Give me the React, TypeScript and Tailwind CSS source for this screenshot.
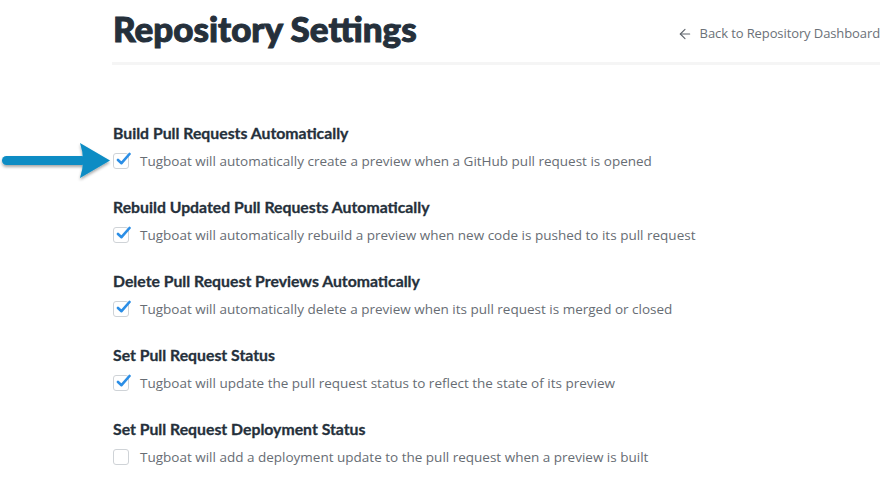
import { ArrowLeft } from 'lucide-react';

type Setting = {
  title: string;
  description: string;
  checked: boolean;
};

const settings: Setting[] = [
  {
    title: 'Build Pull Requests Automatically',
    description: 'Tugboat will automatically create a preview when a GitHub pull request is opened',
    checked: true,
  },
  {
    title: 'Rebuild Updated Pull Requests Automatically',
    description: 'Tugboat will automatically rebuild a preview when new code is pushed to its pull request',
    checked: true,
  },
  {
    title: 'Delete Pull Request Previews Automatically',
    description: 'Tugboat will automatically delete a preview when its pull request is merged or closed',
    checked: true,
  },
  {
    title: 'Set Pull Request Status',
    description: 'Tugboat will update the pull request status to reflect the state of its preview',
    checked: true,
  },
  {
    title: 'Set Pull Request Deployment Status',
    description: 'Tugboat will add a deployment update to the pull request when a preview is built',
    checked: false,
  },
];

function Checkbox({ checked }: { checked: boolean }) {
  return (
    <span className="relative inline-block w-4 h-4 shrink-0 rounded-[3px] border border-[#cfd3d7] bg-white">
      {checked && (
        <svg
          className="absolute -top-[3px] left-[1px] w-[16px] h-[16px]"
          viewBox="0 0 16 16"
          fill="none"
          stroke="#2b8ee6"
          strokeWidth="2.6"
          strokeLinecap="round"
          strokeLinejoin="round"
        >
          <path d="M3 9 L6.5 12.2 L14.5 3" />
        </svg>
      )}
    </span>
  );
}

// annotation arrow pointing at the first checkbox
function Arrow() {
  return (
    <svg className="absolute left-0 top-[142px] w-[112px] h-[40px]" viewBox="0 0 112 40">
      <defs>
        <filter id="sh" x="-10%" y="-30%" width="130%" height="170%">
          <feDropShadow dx="0" dy="2" stdDeviation="1.5" floodColor="#000" floodOpacity="0.35" />
        </filter>
      </defs>
      <g filter="url(#sh)">
        <rect x="2" y="14" width="84" height="9" rx="4.5" fill="#0a8cc4" />
        <path d="M80 1 L110 18.5 L80 36 Q86 18.5 80 1 Z" fill="#0a8cc4" />
      </g>
    </svg>
  );
}

export default function App() {
  return (
    <div className="relative min-h-[485px] bg-white font-['Open_Sans',sans-serif]">
      <Arrow />
      <div className="pl-[112px] pr-[11px]">
        <div className="flex items-start justify-between border-b-[3px] border-[#f5f5f5] pt-[6px] h-[65px]">
          <h1 className="font-['Lato',sans-serif] font-black text-[35px] leading-[44px] text-[#25303b] pl-px [-webkit-text-stroke:1px_#25303b]">
            Repository Settings
          </h1>
          <a className="flex items-center gap-[7px] mt-[18px] text-[13px] text-[#6b7178] tracking-[-0.1px]" href="#">
            <ArrowLeft className="w-[16px] h-[16px] text-[#5f656c]" strokeWidth={1.7} />
            Back to Repository Dashboard
          </a>
        </div>

        <div className="pt-[58px] flex flex-col gap-[26px]">
          {settings.map((s) => (
            <div key={s.title} className="pl-px">
              <h2 className="font-['Lato',sans-serif] font-bold text-[15.8px] leading-[20px] text-[#25303b] [-webkit-text-stroke:0.3px_#25303b]">
                {s.title}
              </h2>
              <label className="mt-[8px] flex items-center gap-[11px] text-[13.5px] leading-[20px] text-[#676d74]">
                <Checkbox checked={s.checked} />
                {s.description}
              </label>
            </div>
          ))}
        </div>
      </div>
    </div>
  );
}
